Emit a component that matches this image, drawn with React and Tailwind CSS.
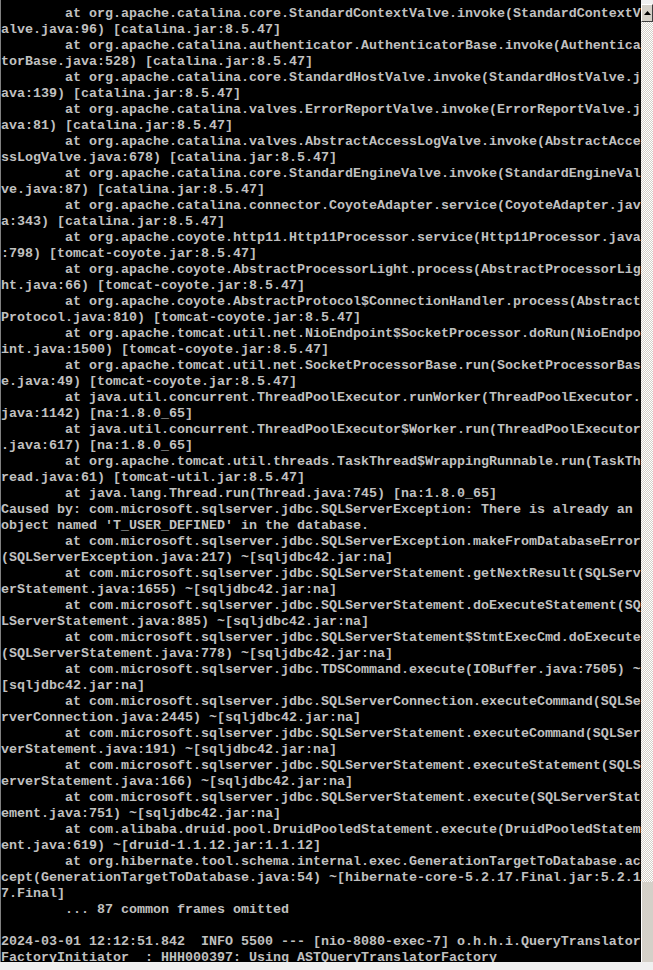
const log = [
  "        at org.apache.catalina.core.StandardContextValve.invoke(StandardContextValve.java:96) [catalina.jar:8.5.47]",
  "        at org.apache.catalina.authenticator.AuthenticatorBase.invoke(AuthenticatorBase.java:528) [catalina.jar:8.5.47]",
  "        at org.apache.catalina.core.StandardHostValve.invoke(StandardHostValve.java:139) [catalina.jar:8.5.47]",
  "        at org.apache.catalina.valves.ErrorReportValve.invoke(ErrorReportValve.java:81) [catalina.jar:8.5.47]",
  "        at org.apache.catalina.valves.AbstractAccessLogValve.invoke(AbstractAccessLogValve.java:678) [catalina.jar:8.5.47]",
  "        at org.apache.catalina.core.StandardEngineValve.invoke(StandardEngineValve.java:87) [catalina.jar:8.5.47]",
  "        at org.apache.catalina.connector.CoyoteAdapter.service(CoyoteAdapter.java:343) [catalina.jar:8.5.47]",
  "        at org.apache.coyote.http11.Http11Processor.service(Http11Processor.java:798) [tomcat-coyote.jar:8.5.47]",
  "        at org.apache.coyote.AbstractProcessorLight.process(AbstractProcessorLight.java:66) [tomcat-coyote.jar:8.5.47]",
  "        at org.apache.coyote.AbstractProtocol$ConnectionHandler.process(AbstractProtocol.java:810) [tomcat-coyote.jar:8.5.47]",
  "        at org.apache.tomcat.util.net.NioEndpoint$SocketProcessor.doRun(NioEndpoint.java:1500) [tomcat-coyote.jar:8.5.47]",
  "        at org.apache.tomcat.util.net.SocketProcessorBase.run(SocketProcessorBase.java:49) [tomcat-coyote.jar:8.5.47]",
  "        at java.util.concurrent.ThreadPoolExecutor.runWorker(ThreadPoolExecutor.java:1142) [na:1.8.0_65]",
  "        at java.util.concurrent.ThreadPoolExecutor$Worker.run(ThreadPoolExecutor.java:617) [na:1.8.0_65]",
  "        at org.apache.tomcat.util.threads.TaskThread$WrappingRunnable.run(TaskThread.java:61) [tomcat-util.jar:8.5.47]",
  "        at java.lang.Thread.run(Thread.java:745) [na:1.8.0_65]",
  "Caused by: com.microsoft.sqlserver.jdbc.SQLServerException: There is already an object named 'T_USER_DEFINED' in the database.",
  "        at com.microsoft.sqlserver.jdbc.SQLServerException.makeFromDatabaseError(SQLServerException.java:217) ~[sqljdbc42.jar:na]",
  "        at com.microsoft.sqlserver.jdbc.SQLServerStatement.getNextResult(SQLServerStatement.java:1655) ~[sqljdbc42.jar:na]",
  "        at com.microsoft.sqlserver.jdbc.SQLServerStatement.doExecuteStatement(SQLServerStatement.java:885) ~[sqljdbc42.jar:na]",
  "        at com.microsoft.sqlserver.jdbc.SQLServerStatement$StmtExecCmd.doExecute(SQLServerStatement.java:778) ~[sqljdbc42.jar:na]",
  "        at com.microsoft.sqlserver.jdbc.TDSCommand.execute(IOBuffer.java:7505) ~[sqljdbc42.jar:na]",
  "        at com.microsoft.sqlserver.jdbc.SQLServerConnection.executeCommand(SQLServerConnection.java:2445) ~[sqljdbc42.jar:na]",
  "        at com.microsoft.sqlserver.jdbc.SQLServerStatement.executeCommand(SQLServerStatement.java:191) ~[sqljdbc42.jar:na]",
  "        at com.microsoft.sqlserver.jdbc.SQLServerStatement.executeStatement(SQLServerStatement.java:166) ~[sqljdbc42.jar:na]",
  "        at com.microsoft.sqlserver.jdbc.SQLServerStatement.execute(SQLServerStatement.java:751) ~[sqljdbc42.jar:na]",
  "        at com.alibaba.druid.pool.DruidPooledStatement.execute(DruidPooledStatement.java:619) ~[druid-1.1.12.jar:1.1.12]",
  "        at org.hibernate.tool.schema.internal.exec.GenerationTargetToDatabase.accept(GenerationTargetToDatabase.java:54) ~[hibernate-core-5.2.17.Final.jar:5.2.17.Final]",
  "        ... 87 common frames omitted",
  "",
  "2024-03-01 12:12:51.842  INFO 5500 --- [nio-8080-exec-7] o.h.h.i.QueryTranslatorFactoryInitiator  : HHH000397: Using ASTQueryTranslatorFactory",
]

// console buffer is 80 columns wide
const rows = log.flatMap((line) => {
  if (!line) return [""]
  const out = []
  for (let i = 0; i < line.length; i += 80) out.push(line.slice(i, i + 80))
  return out
})

function Scrollbar() {
  return (
    <div className="w-[12px] flex flex-col bg-[#f0f0f0]">
      <div className="h-[4px]" />
      <div className="h-[18px] bg-[#d4d0c8] border-t border-l border-white border-r border-b border-r-[#404040] border-b-[#404040] flex items-center justify-center">
        <svg width="7" height="4" viewBox="0 0 7 4">
          <path d="M3.5 0 L7 4 L0 4 Z" fill="#000" />
        </svg>
      </div>
      <div className="flex-1 bg-[repeating-conic-gradient(#ffffff_0_25%,#d4d0c8_0_50%)] bg-[length:2px_2px]" />
      <div className="h-[80px] bg-[#d4d0c8] border-l border-white" />
    </div>
  )
}

export default function App() {
  return (
    <div className="w-[653px] h-[970px] bg-[#f0f0f0] flex flex-col overflow-hidden">
      <div className="h-[962px] flex">
        <div className="w-[641px] bg-black border-l border-[#808080] overflow-hidden pt-[6px]">
          <pre className="font-['Liberation_Mono',monospace] font-bold text-[13.33px] leading-[16px] text-[#c0c0c0] m-0">
            {rows.map((r, i) => (
              <div key={i} className="h-[16px] whitespace-pre">{r}</div>
            ))}
          </pre>
        </div>
        <Scrollbar />
      </div>
    </div>
  )
}
